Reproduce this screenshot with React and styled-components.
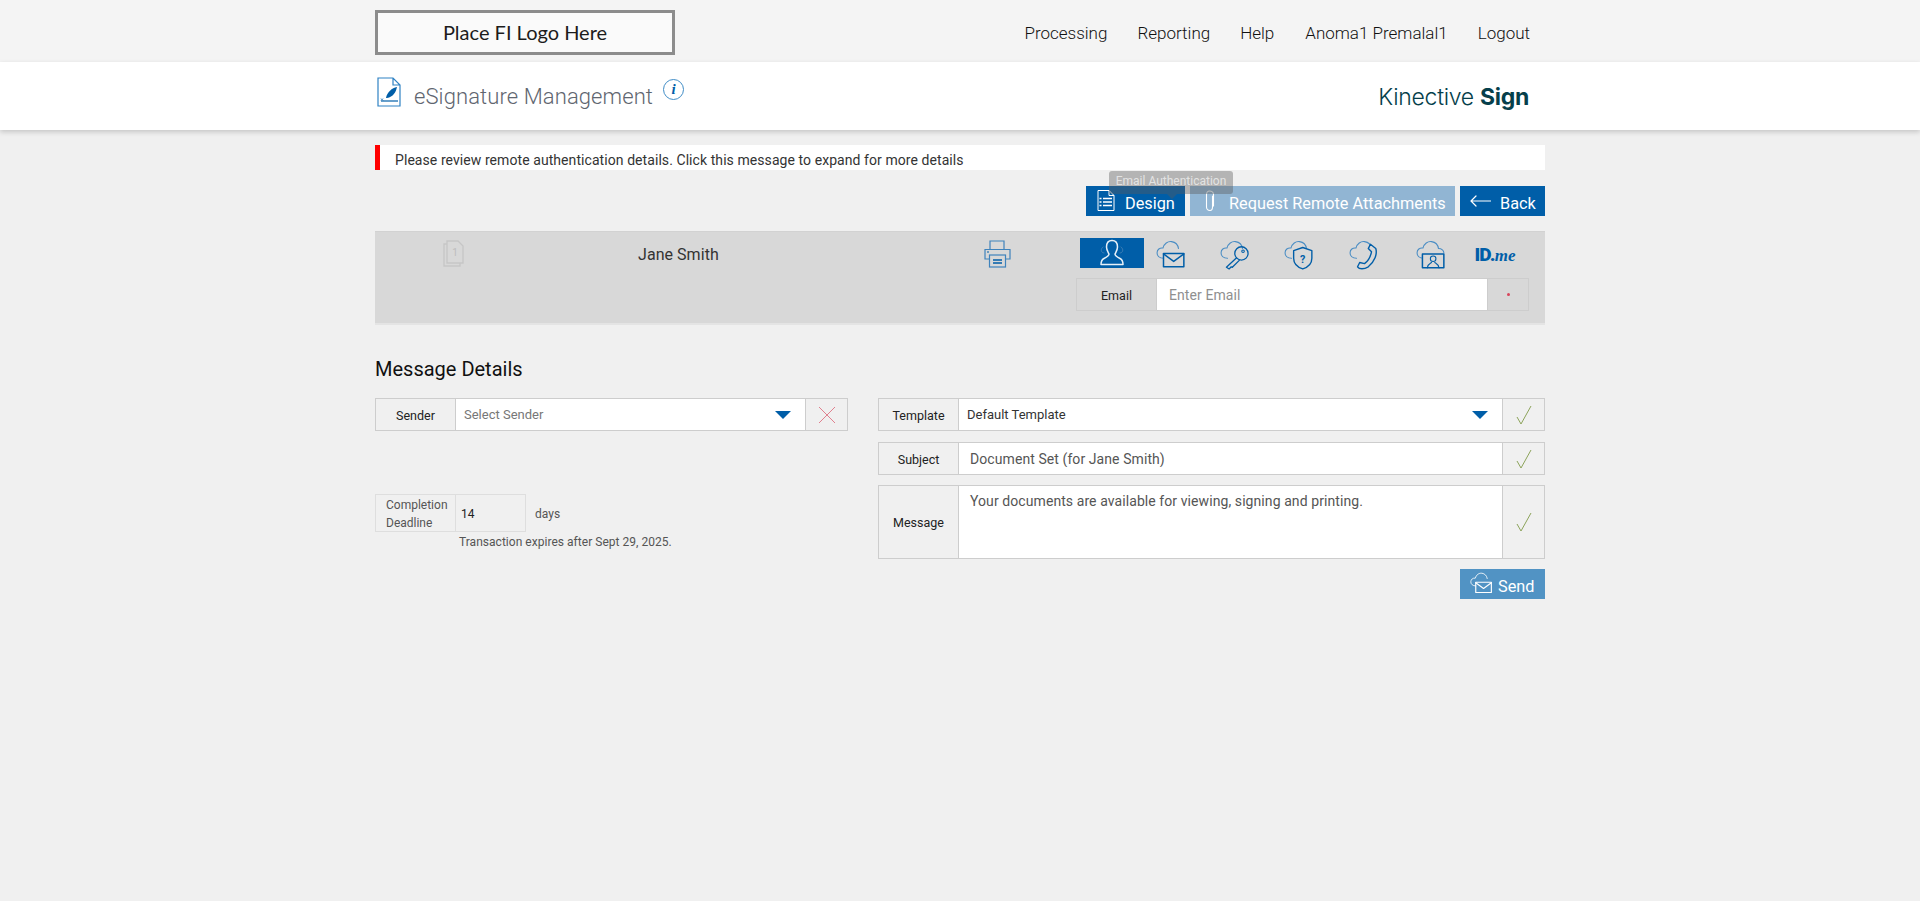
import React from 'react';
import styled, { createGlobalStyle } from 'styled-components';

const GlobalStyle = createGlobalStyle`
    html, body {
        margin: 0;
        padding: 0;
        background: #f0f0f0;
        font-family: Roboto, "Liberation Sans", sans-serif;
    }
    * {
        box-sizing: border-box;
    }
`;

const Wrap = styled.div`
    width: 1170px;
    margin: 0 auto;
`;

const Page = styled.div`
    min-height: 901px;
    background: #f0f0f0;
`;

// Top bar
const TopBar = styled.div`
    height: 62px;
    background: #f4f4f4;
`;

const TopInner = styled(Wrap)`
    display: flex;
    align-items: flex-start;
    justify-content: space-between;
    padding-top: 10px;
`;

const LogoBox = styled.div`
    width: 300px;
    height: 45px;
    border: 3px solid #8c8c8c;
    background: #fafafa;
    padding-bottom: 2px;
    display: flex;
    align-items: center;
    justify-content: center;
    font-family: Lato, sans-serif;
    font-size: 20px;
    color: #1c1c1c;
`;

const Nav = styled.nav`
    display: flex;
    padding: 13px 15px 0 0;
    font-size: 17px;
    font-weight: 300;
    line-height: 20px;
    color: #111;
`;

const NavLink = styled.a`
    margin-left: ${(p) => p.$gap}px;
`;

// Title strip
const Header = styled.div`
    height: 68px;
    background: #fff;
    box-shadow: 0 2px 5px rgba(0, 0, 0, 0.18);
`;

const HeaderInner = styled(Wrap)`
    display: flex;
    justify-content: space-between;
    height: 100%;
`;

const TitleGroup = styled.div`
    display: flex;
    align-items: flex-start;
    padding: 15px 0 0 2px;
`;

const Title = styled.h1`
    margin: 6px 0 0 13px;
    font-size: 22px;
    font-weight: 300;
    line-height: 28px;
    letter-spacing: 0.1px;
    color: #5f6670;
`;

const InfoIcon = styled.span`
    width: 21px;
    height: 21px;
    margin: 2px 0 0 10px;
    border: 1px solid #3f8cc6;
    border-radius: 50%;
    display: flex;
    align-items: center;
    justify-content: center;
    font-family: "Liberation Serif", serif;
    font-style: italic;
    font-weight: bold;
    font-size: 15px;
    color: #005ea8;
`;

const Brand = styled.div`
    padding: 21px 16px 0 0;
    font-family: Inter, sans-serif;
    font-size: 23px;
    font-weight: 300;
    line-height: 28px;
    letter-spacing: -0.3px;
    color: #063f4b;

    b {
        font-weight: 700;
    }
`;

// Alert
const Alert = styled.div`
    margin-top: 15px;
    height: 25px;
    background: #fff;
    border-left: 5px solid #f00;
    padding: 5px 0 0 15px;
    font-size: 14px;
    line-height: 21px;
    letter-spacing: 0.07px;
    color: #333;
`;

// Action buttons
const Actions = styled.div`
    position: relative;
    margin-top: 16px;
    display: flex;
    justify-content: flex-end;
    gap: 5px;
`;

const ActionButton = styled.button`
    height: 30px;
    width: ${(p) => p.$width}px;
    border: none;
    padding: 4px 0 0 ${(p) => p.$pad}px;
    background: ${(p) => (p.$faded ? '#91b5d3' : p.$soft ? '#5193c4' : '#005ea8')};
    color: #fff;
    display: flex;
    align-items: center;
    gap: ${(p) => p.$gap}px;
    font-family: Roboto, sans-serif;
    font-size: 16.3px;
    white-space: nowrap;

    svg {
        margin-top: -5px;
    }
`;

const Tooltip = styled.div`
    position: absolute;
    top: -15px;
    right: 312px;
    width: 124px;
    height: 23px;
    border-radius: 3px;
    background: rgba(90, 90, 90, 0.4);
    color: rgba(255, 255, 255, 0.65);
    font-size: 12px;
    line-height: 21px;
    text-align: center;

    &::after {
        content: '';
        position: absolute;
        left: 58px;
        top: 23px;
        border: 5px solid transparent;
        border-top-color: rgba(90, 90, 90, 0.4);
    }
`;

// Recipient panel
const Panel = styled.div`
    margin-top: 15px;
    height: 94px;
    background: #d8d8d8;
    border-top: 1px solid #d2d2d2;
    border-bottom: 2px solid #e4e4e4;
    display: flex;
    justify-content: space-between;
    padding-right: 16px;
`;

const Summary = styled.div`
    display: grid;
    grid-template-columns: 263px 346px auto;
    align-items: start;
    padding-top: 8px;
`;

const DocCell = styled.div`
    padding-left: 68px;
`;

const RecipientName = styled.div`
    padding-top: 5px;
    font-size: 16px;
    line-height: 20px;
    letter-spacing: 0.05px;
    color: #333;
`;

const AuthBlock = styled.div`
    width: 453px;
    padding-top: 6px;
`;

const Tabs = styled.div`
    display: flex;
    height: 30px;
    margin-left: 4px;
`;

const Tab = styled.div`
    width: ${(p) => (p.$active ? 64 : 64.5)}px;
    padding: ${(p) => (p.$active ? '0' : `3px ${p.$right ?? 10}px 0 0`)};
    display: flex;
    align-items: center;
    justify-content: center;
    background: ${(p) => (p.$active ? '#005ea8' : 'transparent')};
`;

const IdMe = styled.span`
    font-size: 19px;
    font-weight: 900;
    letter-spacing: -0.8px;
    color: #005ea8;

    i {
        font-family: "Liberation Serif", serif;
        font-size: 17px;
        font-weight: 700;
        letter-spacing: 0;
    }
`;

// Form rows share the label / field / addon shape
const FieldRow = styled.div`
    display: flex;
    height: ${(p) => p.$height || 33}px;
    margin-top: ${(p) => p.$top || 0}px;
    border: 1px solid #cdcdcd;
    background: ${(p) => p.$bg || '#f0f0f0'};
`;

const FieldLabel = styled.label`
    width: 79px;
    flex: none;
    padding-top: 1px;
    display: flex;
    align-items: center;
    justify-content: center;
    font-size: 12.5px;
    color: #222;
`;

const TextField = styled.input`
    flex: 1;
    min-width: 0;
    border: none;
    border-left: 1px solid #cdcdcd;
    border-right: 1px solid #cdcdcd;
    outline: none;
    background: #fff;
    padding: 1px ${(p) => p.$pad || 12}px 0;
    font-family: Roboto, sans-serif;
    font-size: 14px;
    letter-spacing: 0.08px;
    color: #555;

    &::placeholder {
        color: #8f8f8f;
        opacity: 1;
    }
`;

const MessageField = styled.textarea`
    flex: 1;
    border: none;
    border-left: 1px solid #cdcdcd;
    border-right: 1px solid #cdcdcd;
    outline: none;
    resize: none;
    background: #fff;
    padding: 6px 11px;
    font-family: Roboto, sans-serif;
    font-size: 14px;
    line-height: 18px;
    letter-spacing: 0.08px;
    color: #555;
`;

const SelectField = styled.div`
    flex: 1;
    display: flex;
    align-items: center;
    justify-content: space-between;
    background: #fff;
    border-left: 1px solid #cdcdcd;
    border-right: 1px solid #cdcdcd;
    padding: 0 14px 0 8px;
    font-size: 13px;
    color: ${(p) => (p.$muted ? '#777' : '#333')};
`;

const Caret = styled.span`
    width: 0;
    height: 0;
    border-left: 8px solid transparent;
    border-right: 8px solid transparent;
    border-top: 8px solid #005ea8;
`;

const Addon = styled.div`
    width: ${(p) => p.$width || 41}px;
    flex: none;
    display: flex;
    align-items: center;
    justify-content: center;
`;

const Dot = styled.span`
    width: 3px;
    height: 3px;
    border-radius: 50%;
    background: #d8445a;
`;

// Message details
const SectionTitle = styled.h2`
    margin: 31px 0 0;
    font-size: 20px;
    font-weight: 400;
    line-height: 26px;
    color: #111;
`;

const Columns = styled.div`
    margin-top: 16px;
    display: flex;
    justify-content: space-between;
    align-items: flex-start;
`;

const LeftColumn = styled.div`
    width: 473px;
`;

const RightColumn = styled.div`
    width: 667px;
`;

const DeadlineRow = styled.div`
    display: flex;
    align-items: center;
    margin-top: 63px;
`;

const DeadlineLabel = styled.div`
    width: 81px;
    height: 38px;
    border: 1px solid #dedede;
    padding: 1px 0 0 10px;
    font-size: 12px;
    line-height: 18px;
    color: #555;
`;

const DeadlineValue = styled.div`
    width: 70px;
    height: 38px;
    border: 1px solid #dedede;
    border-left: none;
    padding: 1px 0 0 5px;
    display: flex;
    align-items: center;
    font-size: 12px;
    color: #222;
`;

const Days = styled.span`
    margin-left: 9px;
    padding-top: 1px;
    font-size: 12px;
    color: #555;
`;

const Expiry = styled.div`
    margin: 3px 0 0 84px;
    font-size: 12px;
    line-height: 15px;
    letter-spacing: 0.03px;
    color: #555;
`;

const SendRow = styled.div`
    margin-top: 10px;
    display: flex;
    justify-content: flex-end;
`;

// Icons
const cloud = 'M7 17 C3 17 1 14.5 1 12 C1 9 3.5 7 6.5 7.5 C7.5 3.5 11 1 14.5 1.5 C18 2 20.5 4.5 21 8';

const Svg = ({ size = 30, children }) => (
    <svg width={size} height={size} viewBox="0 0 28 28" fill="none" strokeLinecap="round" strokeLinejoin="round">
        {children}
    </svg>
);

const CloudLine = ({ color = '#4a8dc4' }) => <path d={cloud} stroke={color} strokeWidth="1" />;

const MailCloudIcon = ({ color = '#005ea8', cloudColor = '#4a8dc4', size = 30 }) => (
    <Svg size={size}>
        <CloudLine color={cloudColor} />
        <rect x="7" y="12.5" width="19" height="12.5" stroke={color} strokeWidth="1.4" fill="none" />
        <path d="M7 13 L16.5 20 L26 13" stroke={color} strokeWidth="1.4" />
    </Svg>
);

const KeyIcon = () => (
    <Svg>
        <CloudLine />
        <circle cx="20" cy="12.5" r="6.2" stroke="#005ea8" strokeWidth="1.2" />
        <circle cx="21.5" cy="10.5" r="1.2" stroke="#005ea8" />
        <path d="M15.5 16.5 L6 25.5 L8.5 27 L10.5 25 L11.5 25.5 L18 19" stroke="#005ea8" strokeWidth="1.2" />
    </Svg>
);

const ShieldIcon = () => (
    <Svg>
        <CloudLine />
        <path d="M9 10 L17.5 7 L26 10 V17 C26 22 22 25.5 17.5 27 C13 25.5 9 22 9 17 Z" stroke="#005ea8" strokeWidth="1.3" fill="#d8d8d8" />
        <text x="17.5" y="21" textAnchor="middle" fontFamily="Roboto, sans-serif" fontWeight="700" fontSize="10" fill="#005ea8">?</text>
    </Svg>
);

const PhoneIcon = () => (
    <Svg>
        <CloudLine />
        <path d="M20 4 L25 8 C26.5 13 24 20 18 25 C14 27.5 9.5 27.5 8 25 L10 21 L14.5 22 C17.5 20 20 16 21 11 L18 8 Z" stroke="#005ea8" strokeWidth="1.3" fill="#d8d8d8" />
    </Svg>
);

const VideoIcon = () => (
    <Svg>
        <CloudLine />
        <path d="M21 8 C24 8 26 10 26 12" stroke="#4a8dc4" />
        <rect x="6" y="13" width="20" height="13" stroke="#005ea8" strokeWidth="1.4" fill="#d8d8d8" />
        <circle cx="16" cy="17.5" r="2.6" stroke="#005ea8" />
        <path d="M10.5 26 C11 22.5 13 22 14.5 21 M21.5 26 C21 22.5 19 22 17.5 21" stroke="#005ea8" />
    </Svg>
);

const PersonIcon = () => (
    <svg width="28" height="28" viewBox="0 0 28 28" fill="none" strokeLinecap="round" strokeLinejoin="round">
        <path d="M6 14 C3 14 2 10 5 8 M22 14 C25 14 26 10 23 8" stroke="#3f7fb5" strokeWidth="1" />
        <path d="M14 1.5 C10 1.5 8.5 4.5 8.5 8 C8.5 11 10 13 11 15 C11 17 9 18 6 19.5 C4 20.5 3 22 3 25.5 H25 C25 22 24 20.5 22 19.5 C19 18 17 17 17 15 C18 13 19.5 11 19.5 8 C19.5 4.5 18 1.5 14 1.5 Z" stroke="#e6f0f8" strokeWidth="1.5" />
    </svg>
);

const SignDocIcon = () => (
    <svg width="24" height="30" viewBox="0 0 24 30" fill="none">
        <path d="M1 1 H16 L23 8 V29 H1 Z M16 1 V8 H23" stroke="#2f82c4" strokeWidth="1.2" />
        <path d="M9 21 C10 15 15 11 20 10 C19 15 16 20 10 21 Z" fill="#005ea8" />
        <path d="M4 24 H21" stroke="#005ea8" strokeWidth="1.2" />
        <path d="M4 21.5 L6 23.5 M6 21.5 L4 23.5" stroke="#005ea8" strokeWidth="0.7" />
    </svg>
);

const DesignIcon = () => (
    <svg width="18" height="21" viewBox="0 0 18 21" fill="none" stroke="#fff">
        <path d="M1 .5 H12 L17 5.5 V20.5 H1 Z M12 .5 V5.5 H17" />
        <path d="M6 8.5 H15 M6 12 H15 M6 15.5 H15" strokeWidth="1.4" />
        <path d="M2.5 8.5 H4.5 M2.5 12 H4.5 M2.5 15.5 H4.5" strokeWidth="1.4" />
    </svg>
);

const ClipIcon = () => (
    <svg width="10" height="22" viewBox="0 0 10 22" fill="none" stroke="#fff" strokeWidth="1.1" strokeLinecap="round">
        <path d="M7.5 6 V17 C7.5 19 6.5 20.5 5 20.5 C3 20.5 1.5 19 1.5 17 V4.5 C1.5 2.5 2.8 1 4.5 1 C6.5 1 8.5 2.5 8.5 4.5 V16" />
    </svg>
);

const BackIcon = () => (
    <svg width="21" height="12" viewBox="0 0 21 12" fill="none" stroke="#fff" strokeWidth="1.2" strokeLinecap="round" strokeLinejoin="round">
        <path d="M1 6 H21 M6 1 L1 6 L6 11" />
    </svg>
);

const PrinterIcon = () => (
    <svg width="27" height="28" viewBox="0 0 27 28" fill="none" stroke="#3f83bc" strokeWidth="1.2">
        <path d="M6 9 V1 H20 V9" />
        <path d="M6 19 H1 V9.5 H26 V19 H21" />
        <rect x="5.5" y="15" width="16" height="12" />
        <path d="M9 20 H18 M9 23 H18" stroke="#005ea8" strokeWidth="1.3" />
        <path d="M3 12 H5" stroke="#005ea8" />
    </svg>
);

const DocStackIcon = () => (
    <svg width="22" height="27" viewBox="0 0 22 27" fill="none" stroke="#c6c6c6" strokeWidth="1.3">
        <path d="M4 1 H15 L20 6 V23 H4 Z" />
        <path d="M4 4 H1 V26 H17 V23" />
        <text x="12" y="16" textAnchor="middle" fontFamily="Roboto, sans-serif" fontSize="10" fill="#bdbdbd" stroke="none">1</text>
    </svg>
);

const CheckIcon = () => (
    <svg width="16" height="20" viewBox="0 0 16 20" fill="none" stroke="#8ca35a" strokeWidth="1">
        <path d="M1 12 L5 19 L15 1" />
    </svg>
);

const CrossIcon = () => (
    <svg width="18" height="18" viewBox="0 0 18 18" fill="none" stroke="#e0808e" strokeWidth="1">
        <path d="M1 1 L17 17 M17 1 L1 17" />
    </svg>
);

const App = () => (
    <Page>
        <GlobalStyle />
        <TopBar>
            <TopInner>
                <LogoBox>Place FI Logo Here</LogoBox>
                <Nav>
                    <NavLink $gap={0}>Processing</NavLink>
                    <NavLink $gap={30}>Reporting</NavLink>
                    <NavLink $gap={30}>Help</NavLink>
                    <NavLink $gap={31}>Anoma1 Premalal1</NavLink>
                    <NavLink $gap={30}>Logout</NavLink>
                </Nav>
            </TopInner>
        </TopBar>
        <Header>
            <HeaderInner>
                <TitleGroup>
                    <SignDocIcon />
                    <Title>eSignature Management</Title>
                    <InfoIcon>i</InfoIcon>
                </TitleGroup>
                <Brand>Kinective <b>Sign</b></Brand>
            </HeaderInner>
        </Header>
        <Wrap>
            <Alert>Please review remote authentication details. Click this message to expand for more details</Alert>
            <Actions>
                <ActionButton $width={99} $pad={11} $gap={10}><DesignIcon />Design</ActionButton>
                <ActionButton $width={265} $pad={15} $gap={14} $faded><ClipIcon />Request Remote Attachments</ActionButton>
                <ActionButton $width={85} $pad={10} $gap={9}><BackIcon />Back</ActionButton>
                <Tooltip>Email Authentication</Tooltip>
            </Actions>
            <Panel>
                <Summary>
                    <DocCell><DocStackIcon /></DocCell>
                    <RecipientName>Jane Smith</RecipientName>
                    <PrinterIcon />
                </Summary>
                <AuthBlock>
                    <Tabs>
                        <Tab $active><PersonIcon /></Tab>
                        <Tab><MailCloudIcon /></Tab>
                        <Tab><KeyIcon /></Tab>
                        <Tab><ShieldIcon /></Tab>
                        <Tab><PhoneIcon /></Tab>
                        <Tab $right={4}><VideoIcon /></Tab>
                        <Tab $right={4}><IdMe>ID.<i>me</i></IdMe></Tab>
                    </Tabs>
                    <FieldRow $top={10} $bg="#d8d8d8">
                        <FieldLabel>Email</FieldLabel>
                        <TextField placeholder="Enter Email" $pad={12} />
                        <Addon $width={40}><Dot /></Addon>
                    </FieldRow>
                </AuthBlock>
            </Panel>
            <SectionTitle>Message Details</SectionTitle>
            <Columns>
                <LeftColumn>
                    <FieldRow>
                        <FieldLabel>Sender</FieldLabel>
                        <SelectField $muted>Select Sender<Caret /></SelectField>
                        <Addon><CrossIcon /></Addon>
                    </FieldRow>
                    <DeadlineRow>
                        <DeadlineLabel>Completion<br />Deadline</DeadlineLabel>
                        <DeadlineValue>14</DeadlineValue>
                        <Days>days</Days>
                    </DeadlineRow>
                    <Expiry>Transaction expires after Sept 29, 2025.</Expiry>
                </LeftColumn>
                <RightColumn>
                    <FieldRow>
                        <FieldLabel>Template</FieldLabel>
                        <SelectField>Default Template<Caret /></SelectField>
                        <Addon><CheckIcon /></Addon>
                    </FieldRow>
                    <FieldRow $top={11}>
                        <FieldLabel>Subject</FieldLabel>
                        <TextField defaultValue="Document Set (for Jane Smith)" $pad={11} />
                        <Addon><CheckIcon /></Addon>
                    </FieldRow>
                    <FieldRow $top={10} $height={74}>
                        <FieldLabel>Message</FieldLabel>
                        <MessageField defaultValue="Your documents are available for viewing, signing and printing." />
                        <Addon><CheckIcon /></Addon>
                    </FieldRow>
                    <SendRow>
                        <ActionButton $width={85} $pad={10} $gap={5} $soft><MailCloudIcon color="#fff" cloudColor="#fff" size={23} />Send</ActionButton>
                    </SendRow>
                </RightColumn>
            </Columns>
        </Wrap>
    </Page>
);

export default App;
